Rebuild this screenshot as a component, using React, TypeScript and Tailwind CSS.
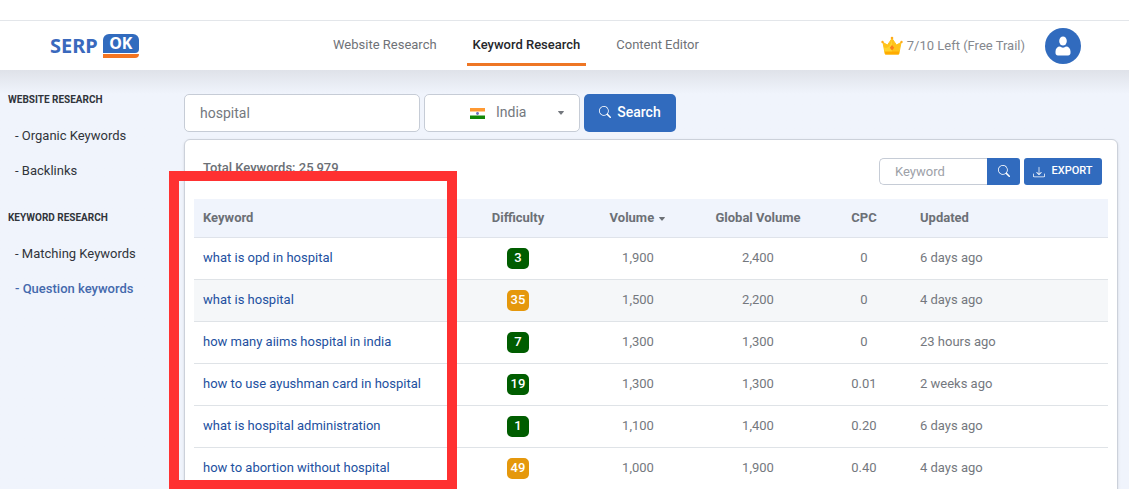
import { BsCaretDownFill, BsDownload, BsSearch } from "react-icons/bs";

const KEYWORDS = [
  { keyword: "what is opd in hospital", difficulty: 3, volume: "1,900", global: "2,400", cpc: "0", updated: "6 days ago" },
  { keyword: "what is hospital", difficulty: 35, volume: "1,500", global: "2,200", cpc: "0", updated: "4 days ago" },
  { keyword: "how many aiims hospital in india", difficulty: 7, volume: "1,300", global: "1,300", cpc: "0", updated: "23 hours ago" },
  { keyword: "how to use ayushman card in hospital", difficulty: 19, volume: "1,300", global: "1,300", cpc: "0.01", updated: "2 weeks ago" },
  { keyword: "what is hospital administration", difficulty: 1, volume: "1,100", global: "1,400", cpc: "0.20", updated: "6 days ago" },
  { keyword: "how to abortion without hospital", difficulty: 49, volume: "1,000", global: "1,900", cpc: "0.40", updated: "4 days ago" },
];

const SIDEBAR = [
  { title: "Website Research", links: ["Organic Keywords", "Backlinks"] },
  { title: "Keyword Research", links: ["Matching Keywords", "Question keywords"] },
];

function Logo() {
  return (
    <a href="#" className="flex items-center gap-1.25 font-['Noto_Sans'] text-xl leading-6 font-bold text-[#3a69bd]">
      SERP
      <span className="flex flex-col gap-px">
        <span className="flex h-4.75 w-9 items-center justify-center rounded-t-md rounded-br-sm bg-[#316bbe] text-base text-white">
          OK
        </span>
        <span className="h-1 rounded-br-full bg-[#f47521]" />
      </span>
    </a>
  );
}

function Crown() {
  return (
    <svg viewBox="0 0 22 20" className="h-5 w-5.5" aria-hidden="true">
      <path d="M2 6.500 6.500 9 11 2.500 15.500 9 20 6.500 17.800 18H4.200z" fill="#ffc31a" stroke="#ffc31a" strokeWidth="1" strokeLinejoin="round" />
      <path d="M11 3v15H4.200L3 11.500C7 13 10 9.500 11 3z" fill="#ffd42e" />
      <path d="M3.800 15.500h14.400l-.5 3H4.300z" fill="#ffab00" />
      <circle cx="1.500" cy="6" r="1.200" fill="#ffab1a" />
      <circle cx="20.500" cy="6" r="1.200" fill="#ffab1a" />
      <circle cx="11" cy="2" r="1.300" fill="#ffab1a" />
      <path d="m11 9 2.200 2.800-2.200 2.800-2.200-2.800z" fill="#fb7d1c" />
    </svg>
  );
}

function Flag() {
  return (
    <svg viewBox="0 0 15 11" className="h-2.75 w-3.75" aria-hidden="true">
      <path d="M0 0h15v11H0z" fill="#fff" />
      <path d="M0 0h15v3.500H0z" fill="#ff9933" />
      <path d="M0 7.500h15V11H0z" fill="#128807" />
      <circle cx="7.500" cy="5.500" r="1.400" fill="#6d6dbb" />
    </svg>
  );
}

function Header() {
  const link = "border-b-3 px-1.5 pt-2.5 pb-2 leading-5";
  return (
    <header className="flex h-12.5 items-center border-t border-[#e3e6ea] bg-white px-12 text-[13px]">
      <div className="w-[279px] shrink-0 pl-0.5">
        <Logo />
      </div>
      <nav className="flex gap-6 text-[#6f7277]">
        <a href="#" className={`${link} border-transparent`}>Website Research</a>
        <a href="#" className={`${link} border-[#ee7624] font-medium text-[#26282c]`}>Keyword Research</a>
        <a href="#" className={`${link} border-transparent`}>Content Editor</a>
      </nav>
      <div className="ml-auto flex items-center text-[#85888e]">
        <Crown />
        <span className="ml-1 text-[13px]">7/10 Left (Free Trail)</span>
        <button type="button" aria-label="Account" className="ml-5 flex size-9 items-center justify-center rounded-full bg-[#316bbe]">
          <svg viewBox="0 0 20 20" className="size-5" fill="#fff" aria-hidden="true">
            <ellipse cx="10" cy="5" rx="3.800" ry="4.600" />
            <path d="M2.500 15.600c0-3 1.800-5 4.500-5 .9.700 1.900 1.100 3 1.100s2.100-.4 3-1.100c2.700 0 4.500 2 4.500 5V17c0 1.500-1 2.400-2.400 2.400H4.900C3.500 19.400 2.500 18.500 2.500 17z" />
          </svg>
        </button>
      </div>
    </header>
  );
}

function Sidebar() {
  return (
    <aside className="w-46 shrink-0 pl-2 text-[#30343b]">
      {SIDEBAR.map((group) => (
        <section key={group.title} className="mb-6">
          <h2 className="text-[10px] leading-3 font-bold uppercase">{group.title}</h2>
          <ul className="pt-3 pl-1.75 text-[13px] leading-[35px]">
            {group.links.map((name) => (
              <li key={name}>
                <a href="#" className={name === "Question keywords" ? "font-medium text-[#4469ad]" : ""}>
                  - {name}
                </a>
              </li>
            ))}
          </ul>
        </section>
      ))}
    </aside>
  );
}

function SearchBar() {
  return (
    <form className="flex h-9.5 gap-1 text-[#74787e]">
      <input
        aria-label="Search keyword"
        defaultValue="hospital"
        className="w-59 rounded-[5px] border border-[#c6ccd6] bg-white px-3.75 text-sm outline-none"
      />
      <div className="relative w-39">
        <select
          aria-label="Country"
          className="size-full appearance-none rounded-[5px] border border-[#c6ccd6] bg-white pr-8 pb-0.5 pl-[71px] text-sm outline-none"
        >
          <option>India</option>
        </select>
        <span className="pointer-events-none absolute inset-y-0 left-11.5 flex items-center">
          <Flag />
        </span>
        <BsCaretDownFill className="pointer-events-none absolute inset-y-0 right-3.75 my-auto size-2" />
      </div>
      <button type="button" className="flex w-23 items-center justify-center gap-1.5 rounded-[5px] bg-[#316bbe] pb-0.5 text-sm font-medium text-white">
        <BsSearch className="size-3" /> Search
      </button>
    </form>
  );
}

function Toolbar() {
  return (
    <div className="mb-3.5 flex h-6.75 items-center gap-1 pr-1.5 pl-2.25">
      <h1 className="mr-auto self-start text-[13px] leading-5 font-medium text-[#6c7076]">Total Keywords: 25,979</h1>
      <div className="flex h-full">
        <input
          aria-label="Filter keywords"
          placeholder="Keyword"
          className="w-27 rounded-l-[5px] border border-r-0 border-[#c6ccd6] px-3.75 text-[13px] outline-none placeholder:text-[#9da1a8]"
        />
        <button type="button" aria-label="Filter" className="flex w-8.25 items-center justify-center rounded-r-[3px] bg-[#316bbe] pb-0.5 text-white">
          <BsSearch className="size-3" />
        </button>
      </div>
      <button type="button" className="flex h-full w-19.5 items-center justify-center gap-1.5 rounded-[3px] bg-[#316bbe] text-[11px] font-medium text-white">
        <BsDownload className="size-3" /> EXPORT
      </button>
    </div>
  );
}

function KeywordTable() {
  return (
    <table className="w-full table-fixed text-center text-[13px] text-[#74787e]">
      <thead>
        <tr className="h-9.5 border-b border-[#dfe3ea] bg-[#f0f4fc] text-[#6c7076]">
          <th className="px-2.25 text-left">Keyword</th>
          <th className="w-30">Difficulty</th>
          <th className="w-30">
            Volume <BsCaretDownFill className="ml-px inline size-2" />
          </th>
          <th className="w-30">Global Volume</th>
          <th className="w-23">CPC</th>
          <th className="w-49.5 px-2.5 text-left">Updated</th>
        </tr>
      </thead>
      <tbody>
        {KEYWORDS.map((row) => (
          <tr key={row.keyword} className="h-10.5 border-b border-[#dfe3e7] nth-2:bg-[#f5f7f9]">
            <td className="px-2.25 text-left">
              <a href="#" className="text-[#2250a0]">{row.keyword}</a>
            </td>
            <td>
              <span
                className={`mx-auto flex h-5.25 w-5.5 items-center justify-center rounded-[5px] font-medium text-white ${
                  row.difficulty < 30 ? "bg-[#005d00]" : "bg-[#e5980c]"
                }`}
              >
                {row.difficulty}
              </span>
            </td>
            <td>{row.volume}</td>
            <td>{row.global}</td>
            <td>{row.cpc}</td>
            <td className="px-2.5 text-left">{row.updated}</td>
          </tr>
        ))}
      </tbody>
    </table>
  );
}

export default function App() {
  return (
    <div className="h-screen overflow-hidden bg-white pt-5 pr-0.5 font-[Roboto,'Noto_Sans',sans-serif]">
      <Header />
      {/* the page body carries the header's soft shadow as a fade at its top */}
      <div className="flex min-h-full bg-[#f0f4fc] bg-linear-to-b from-[#dfe2e9] to-[#f0f4fc] to-[24px] pt-6">
        <Sidebar />
        <main className="min-w-0 flex-1 pr-2.75">
          <SearchBar />
          <div className="relative mt-1.75 rounded-t-md border border-[#ccd1da] bg-white px-2.25 pt-4.5 shadow-sm">
            <Toolbar />
            <KeywordTable />
            {/* highlight frame around the keyword column */}
            <div className="pointer-events-none absolute top-7.75 bottom-0 -left-4 w-72 border-10 border-[#ff3131]" />
          </div>
        </main>
      </div>
    </div>
  );
}
